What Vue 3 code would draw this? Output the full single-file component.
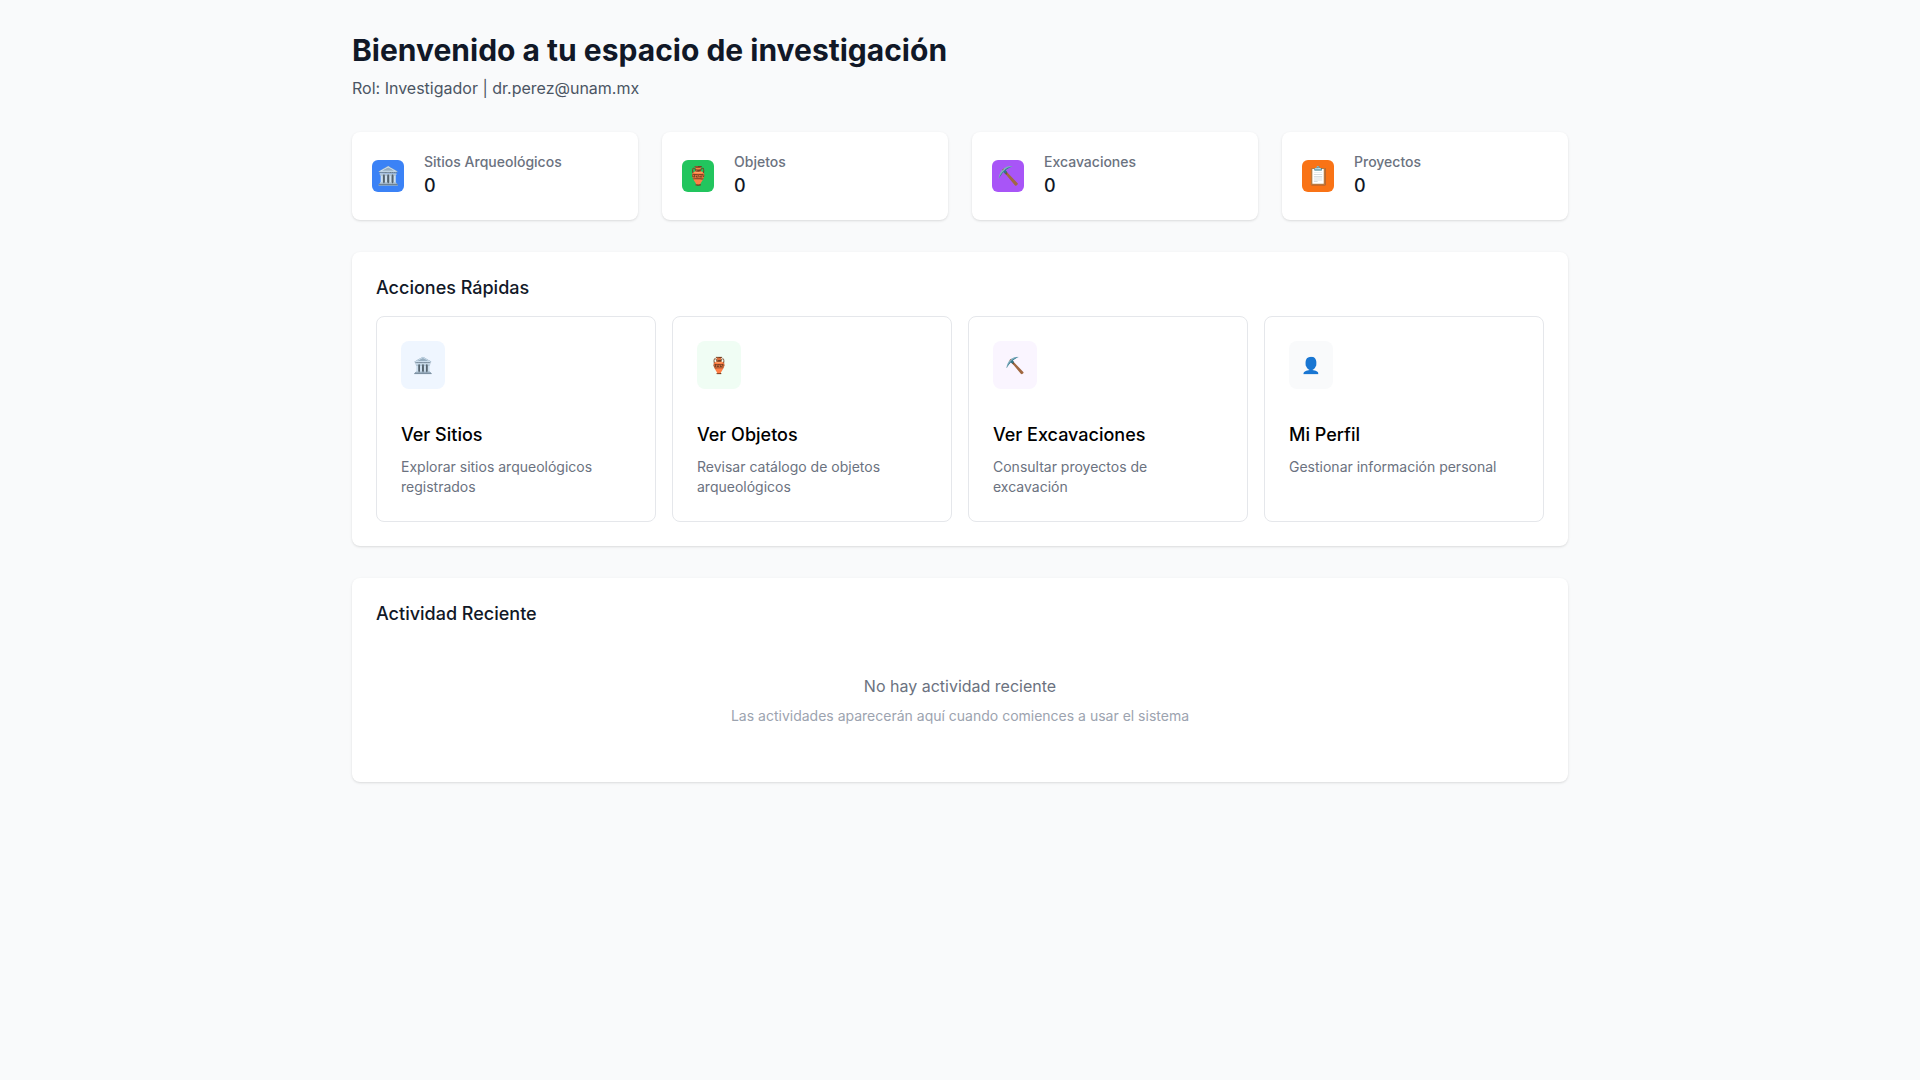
<script setup>
const stats = [
  { icon: '🏛️', label: 'Sitios Arqueológicos', value: 0, tone: 'blue' },
  { icon: '🏺', label: 'Objetos', value: 0, tone: 'green' },
  { icon: '⛏️', label: 'Excavaciones', value: 0, tone: 'purple' },
  { icon: '📋', label: 'Proyectos', value: 0, tone: 'orange' },
]
const actions = [
  { icon: '🏛️', title: 'Ver Sitios', text: 'Explorar sitios arqueológicos registrados', tone: 'blue' },
  { icon: '🏺', title: 'Ver Objetos', text: 'Revisar catálogo de objetos arqueológicos', tone: 'green' },
  { icon: '⛏️', title: 'Ver Excavaciones', text: 'Consultar proyectos de excavación', tone: 'purple' },
  { icon: '👤', title: 'Mi Perfil', text: 'Gestionar información personal', tone: 'gray' },
]
</script>

<template>
  <main class="page">
    <div class="container">
      <header class="intro">
        <h1>Bienvenido a tu espacio de investigación</h1>
        <p>Rol: Investigador | dr.perez@unam.mx</p>
      </header>

      <section class="stats">
        <div v-for="s in stats" :key="s.label" class="card stat">
          <div class="badge" :class="s.tone">{{ s.icon }}</div>
          <dl>
            <dt>{{ s.label }}</dt>
            <dd>{{ s.value }}</dd>
          </dl>
        </div>
      </section>

      <section class="card panel">
        <h2>Acciones Rápidas</h2>
        <div class="actions">
          <a v-for="a in actions" :key="a.title" href="#" class="action">
            <span class="chip" :class="a.tone">{{ a.icon }}</span>
            <h3>{{ a.title }}</h3>
            <p>{{ a.text }}</p>
          </a>
        </div>
      </section>

      <section class="card panel">
        <h2>Actividad Reciente</h2>
        <div class="empty">
          <p>No hay actividad reciente</p>
          <p class="hint">Las actividades aparecerán aquí cuando comiences a usar el sistema</p>
        </div>
      </section>
    </div>
  </main>
</template>

<style>
body {
  background: #f9fafb;
}
</style>

<style scoped>
* {
  box-sizing: border-box;
  margin: 0;
}
.page {
  font-family: Inter, "Noto Sans", sans-serif;
  font-size: 16px;
  line-height: 24px;
  color: #111827;
}
.container {
  max-width: 1280px;
  margin: 0 auto;
  padding: 32px;
}
.intro {
  margin-bottom: 32px;
}
h1 {
  font-size: 30px;
  line-height: 36px;
  font-weight: 700;
}
.intro p {
  margin-top: 8px;
  color: #4b5563;
}
.card {
  background: #fff;
  border-radius: 8px;
  box-shadow: 0 1px 3px rgba(0, 0, 0, 0.1), 0 1px 2px -1px rgba(0, 0, 0, 0.1);
}
.stats {
  display: grid;
  grid-template-columns: repeat(4, 1fr);
  gap: 24px;
  margin-bottom: 32px;
}
.stat {
  display: flex;
  align-items: center;
  padding: 20px;
}
.badge {
  display: flex;
  align-items: center;
  justify-content: center;
  width: 32px;
  height: 32px;
  border-radius: 6px;
  font-size: 18px;
  line-height: 28px;
  color: #fff;
}
.badge.blue { background: #3b82f6; }
.badge.green { background: #22c55e; }
.badge.purple { background: #a855f7; }
.badge.orange { background: #f97316; }
dl {
  margin-left: 20px;
}
dt {
  font-size: 14px;
  line-height: 20px;
  font-weight: 500;
  color: #6b7280;
}
dd {
  font-size: 18px;
  line-height: 28px;
  font-weight: 500;
}
.panel {
  padding: 24px;
  margin-bottom: 32px;
}
.panel:last-child {
  margin-bottom: 0;
}
h2,
h3 {
  font-size: 18px;
  font-weight: 500;
}
h2 {
  line-height: 24px;
  margin-bottom: 16px;
}
.actions {
  display: grid;
  grid-template-columns: repeat(4, 1fr);
  gap: 16px;
}
.action {
  padding: 24px;
  border: 1px solid #e5e7eb;
  border-radius: 8px;
  color: #000;
  text-decoration: none;
}
.chip {
  display: inline-flex;
  padding: 12px;
  border-radius: 8px;
}
.chip.blue { background: #eff6ff; }
.chip.green { background: #f0fdf4; }
.chip.purple { background: #faf5ff; }
.chip.gray { background: #f9fafb; }
h3 {
  line-height: 28px;
  margin-top: 32px;
}
.action p {
  margin-top: 8px;
  font-size: 14px;
  line-height: 20px;
  color: #6b7280;
}
.empty {
  padding: 32px 0;
  text-align: center;
  color: #6b7280;
}
.empty .hint {
  margin-top: 8px;
  font-size: 14px;
  line-height: 20px;
  color: #9ca3af;
}
</style>
